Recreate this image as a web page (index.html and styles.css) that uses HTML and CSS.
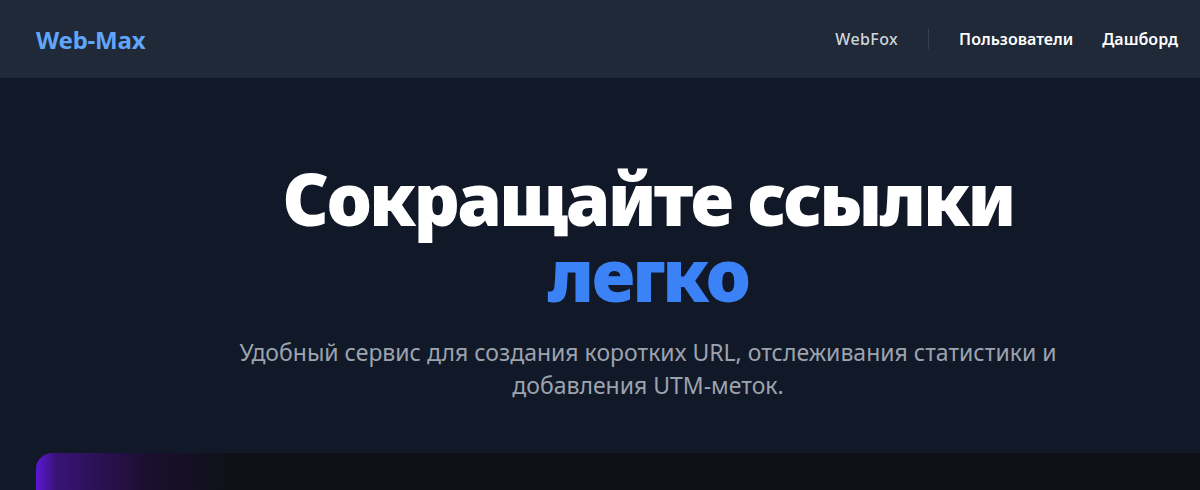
FILE: index.html
```html
<!DOCTYPE html>
<html lang="ru">
<head>
<meta charset="utf-8">
<title>Web-Max</title>
<link rel="stylesheet" href="styles.css">
</head>
<body>
<header class="topbar">
  <div class="logo">Web-Max</div>
  <nav class="nav">
    <a class="nav-link muted" href="#">WebFox</a>
    <span class="divider"></span>
    <a class="nav-link" href="#">Пользователи</a>
    <a class="nav-link" href="#">Дашборд</a>
  </nav>
</header>
<main class="hero">
  <h1 class="title">Сокращайте ссылки<br><span class="accent">легко</span></h1>
  <p class="subtitle">Удобный сервис для создания коротких URL, отслеживания статистики и добавления UTM-меток.</p>
  <section class="card"></section>
</main>
</body>
</html>
```
FILE: styles.css
```css
* { box-sizing: border-box; }
html, body { margin: 0; padding: 0; }
body {
  background: #111827;
  font-family: "Noto Sans", "Open Sans", "DejaVu Sans", sans-serif;
  color: #fff;
  overflow: hidden;
  height: 490px;
}
.topbar {
  height: 78px;
  background: #1f2937;
  display: flex;
  align-items: center;
  justify-content: space-between;
  padding: 0 22px 0 36px;
}
.logo {
  font-size: 24px;
  font-weight: 700;
  color: #60a5fa;
  letter-spacing: -0.2px;
}
.nav {
  display: flex;
  align-items: center;
}
.nav-link {
  color: #fff;
  text-decoration: none;
  font-size: 16px;
  font-weight: 600;
  margin-left: 29px;
}
.nav-link.muted {
  color: #d1d5db;
  font-weight: 500;
  margin-left: 0;
  letter-spacing: 0.4px;
}
.divider {
  width: 1px;
  height: 20px;
  background: #374151;
  margin-left: 30px;
  margin-right: 1px;
}
.hero {
  width: 1296px;
  display: flex;
  flex-direction: column;
  align-items: center;
  padding-top: 82px;
}
.title {
  margin: 0;
  text-align: center;
  font-size: 72px;
  line-height: 76px;
  font-weight: 900;
  letter-spacing: -2.6px;
}
.accent { color: #3b82f6; }
.subtitle {
  margin: 24px 0 0;
  max-width: 870px;
  text-align: center;
  font-size: 23px;
  line-height: 33px;
  color: #9ca3af;
}
.card {
  align-self: stretch;
  margin: 51px 36px 0 36px;
  height: 300px;
  border-radius: 16px;
  background:
    linear-gradient(90deg, #5b17d8 0%, rgba(70, 20, 150, 0.75) 20px, rgba(40, 12, 70, 0.5) 110px, rgba(15, 17, 25, 0) 190px),
    #0f1119;
}
```
